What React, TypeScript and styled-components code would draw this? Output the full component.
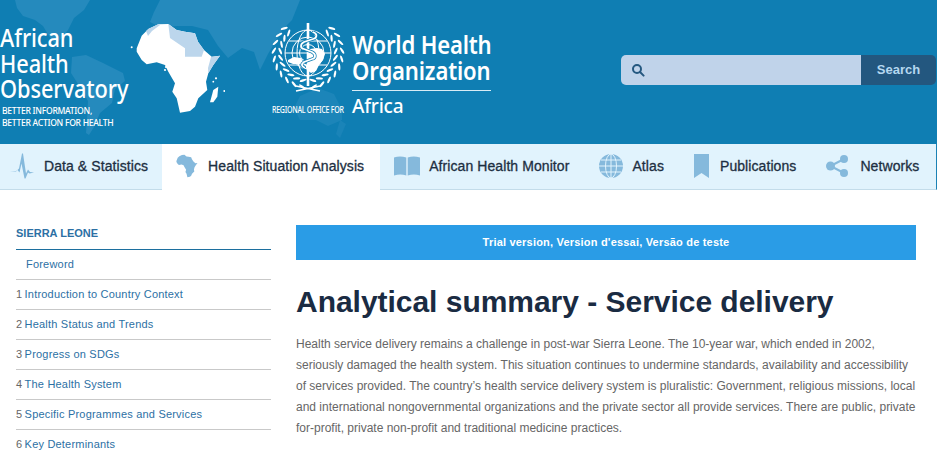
import React from 'react'
import styled, { createGlobalStyle } from 'styled-components'

const GlobalStyle = createGlobalStyle`
  html, body {
    margin: 0;
    padding: 0;
    background: #fff;
    overflow: hidden;
  }
  body {
    font-family: "Liberation Sans", Arial, sans-serif;
  }
`

const Page = styled.div`
  width: 937px;
  height: 451px;
  overflow: hidden;
`

const Header = styled.header`
  position: relative;
  display: flex;
  align-items: flex-start;
  height: 144px;
  background: #0f7eb3;
  overflow: hidden;
`

const WorldMap = styled.svg`
  position: absolute;
  left: 0;
  top: 0;
  width: 520px;
  height: 144px;
`

const Brand = styled.div`
  position: relative;
  flex: none;
  width: 130px;
  padding-top: 25px;
  color: #fff;
  font-family: "Noto Sans", sans-serif;
`

const BrandTitle = styled.div`
  font-size: 24.5px;
  font-weight: 500;
  line-height: 25.5px;
  letter-spacing: -0.1px;
  transform: scaleX(0.89);
  transform-origin: left;
  white-space: nowrap;
`

const BrandTag = styled.div`
  margin: 3px 0 0 2px;
  font-size: 8.6px;
  font-weight: 500;
  line-height: 12px;
  letter-spacing: -0.3px;
  white-space: nowrap;
`

const AfricaShape = styled.svg`
  position: relative;
  flex: none;
  width: 95px;
  height: 105px;
  margin-top: 15px;
`

const Emblem = styled.svg`
  position: relative;
  flex: none;
  width: 80px;
  height: 80px;
  margin: 18px 0 0 43px;
`

const WhoBlock = styled.div`
  position: relative;
  flex: none;
  width: 139px;
  margin: 32px 0 0 4px;
  color: #fff;
  font-family: "Noto Sans", sans-serif;
`

const WhoName = styled.div`
  font-size: 26px;
  font-weight: 600;
  line-height: 25.5px;
  letter-spacing: -0.2px;
  transform: scaleX(0.85);
  transform-origin: left;
  white-space: nowrap;
`

const WhoRule = styled.div`
  height: 1px;
  margin-top: 7px;
  background: #d8ecf6;
`

const OfficeRow = styled.div`
  display: flex;
  align-items: baseline;
  margin: 2px 0 0 -80px;
`

const OfficeLabel = styled.span`
  width: 80px;
  font-size: 8.4px;
  font-weight: 500;
  letter-spacing: -0.3px;
  transform: scaleX(0.84);
  transform-origin: left;
  white-space: nowrap;
`

const OfficeName = styled.span`
  font-size: 19px;
  font-weight: 500;
  letter-spacing: -0.2px;
`

const Search = styled.form`
  position: absolute;
  left: 621px;
  top: 55px;
  display: flex;
  width: 315px;
  height: 30px;
  margin: 0;
  border-radius: 5px;
  overflow: hidden;
`

const SearchField = styled.div`
  display: flex;
  align-items: center;
  width: 240px;
  padding-left: 10px;
  box-sizing: border-box;
  background: #c0d3ea;
  color: #255880;
`

const SearchButton = styled.button`
  width: 75px;
  padding: 0 0 2px;
  border: 0;
  background: #23577f;
  color: #b5d8f0;
  font: bold 13px "Liberation Sans", Arial, sans-serif;
`

const Nav = styled.nav`
  display: flex;
  height: 46px;
  box-sizing: border-box;
  background: #e1f3fd;
  border-bottom: 1px solid #c3dcea;
  border-right: 1px solid #1b82b5;
`

const Tab = styled.a<{ $active?: boolean; $first?: boolean; $gap: number }>`
  display: flex;
  align-items: center;
  gap: ${p => p.$gap}px;
  height: ${p => (p.$active ? '46px' : '45px')};
  box-sizing: border-box;
  padding: 0 ${p => (p.$first ? 14 : 16)}px 2px ${p => (p.$first ? 10 : 14)}px;
  background: ${p => (p.$active ? '#fff' : 'transparent')};
  color: #1d2f42;
  font-size: 14px;
  -webkit-text-stroke: 0.3px #1d2f42;
  letter-spacing: 0.08px;
  white-space: nowrap;
`

const TabIcon = styled.svg`
  flex: none;
  display: block;
  fill: #85b9dc;
`

const Body = styled.div`
  display: flex;
  align-items: flex-start;
  gap: 25px;
  padding: 35px 21px 0 16px;
`

const Sidebar = styled.aside`
  flex: none;
  width: 255px;
`

const SideTitle = styled.div`
  height: 24px;
  border-bottom: 1px solid #1c6f9e;
  color: #2c70a4;
  font-size: 11px;
  font-weight: bold;
  line-height: 16px;
  white-space: nowrap;
`

const SideList = styled.ul`
  margin: 0;
  padding: 0;
  list-style: none;
`

const SideItem = styled.li<{ $plain?: boolean }>`
  height: 30px;
  box-sizing: border-box;
  padding-left: ${p => (p.$plain ? 10 : 0)}px;
  border-bottom: 1px solid #c9c9c9;
  color: #666;
  font-size: 11px;
  line-height: 29px;
  letter-spacing: 0.2px;
  white-space: nowrap;

  &:last-child {
    border-bottom: 0;
  }
`

const SideNumber = styled.span`
  margin-right: -1px;
`

const SideLink = styled.a`
  color: #2c70a4;
`

const Main = styled.main`
  flex: 1;
  min-width: 0;
`

const Notice = styled.div`
  height: 35px;
  background: #2a9ce6;
  color: #fff;
  font-size: 11px;
  font-weight: bold;
  line-height: 35px;
  letter-spacing: 0.2px;
  text-align: center;
`

const Title = styled.h1`
  margin: 24px 0 0;
  color: #1a2b42;
  font-size: 30px;
  font-weight: bold;
  line-height: 36px;
  letter-spacing: -0.03px;
  white-space: nowrap;
`

const Paragraph = styled.p`
  margin: 14px 0 0;
  color: #666;
  font-size: 12px;
  line-height: 21px;
`

const AFRICA =
  'M136.700 48.300L141.700 35.700L148.300 29L158.300 24.300L168.300 24L176.700 30L185 31.700L195 33.300L198 41.700L204 50L211.700 56.700L220 55.700L213.300 65L208.300 73.300L206 81.700L207.300 90L198.300 98.300L195 106.700L190 111L180 112.700L176.700 98.300L172.300 91.700L175 83.300L168.300 71.700L165 65L156.700 62.300L146.700 64.300L141.700 60L136.700 51.700Z'

const menu = [
  { n: '1', label: 'Introduction to Country Context' },
  { n: '2', label: 'Health Status and Trends' },
  { n: '3', label: 'Progress on SDGs' },
  { n: '4', label: 'The Health System' },
  { n: '5', label: 'Specific Programmes and Services' },
  { n: '6', label: 'Key Determinants' },
]

const wreathAngles = [100, 114, 128, 142, 156, 170, 184, 198, 212, 226]

const WhoEmblem = () => (
  <Emblem viewBox="0 0 80 80">
    <g fill="none" stroke="#fff" strokeWidth="1">
      <circle cx="40" cy="35" r="23" />
      <circle cx="40" cy="35" r="16" />
      <circle cx="40" cy="35" r="8.500" />
      <ellipse cx="40" cy="35" rx="11" ry="23" />
      <path d="M17 35h46M21 23h38M21 47h38" />
    </g>
    <path
      fill="#fff"
      d="M20 42l6-3 7 1 3 5 3 2V36l3-5 7-1 5 1 3 5-2 6-4 5-3 6-5 2-4-3-2-5-6-1-6 0-5-2z"
    />
    <rect x="38.700" y="5" width="2.600" height="63" fill="#fff" />
    {['#0f7eb3', '#fff'].map((stroke, i) => (
      <path
        key={stroke}
        d="M45 14c5 2 4 6 0 7l-9 3c-4 2-4 6 0 7l8 3c4 2 4 6 0 7l-8 3c-3 2-3 4 1 6"
        fill="none"
        stroke={stroke}
        strokeWidth={i === 0 ? 3.2 : 1.8}
      />
    ))}
    {[0, 1].map(side => (
      <g key={side} transform={side === 1 ? 'translate(80 0) scale(-1 1)' : undefined}>
        {wreathAngles.map(a => {
          const rad = (a * Math.PI) / 180
          return [-3.2, 3.2].map(off => {
            const r = 31 + off
            const x = 40 + Math.cos(rad) * r
            const y = 35 + Math.sin(rad) * r
            const tilt = a + 90 + (off > 0 ? 28 : -28)
            return (
              <ellipse
                key={off}
                cx={x}
                cy={y}
                rx="3.600"
                ry="1.100"
                fill="#fff"
                transform={`rotate(${tilt} ${x} ${y})`}
              />
            )
          })
        })}
      </g>
    ))}
    <path d="M28 73l24-5M52 73l-24-5" stroke="#fff" strokeWidth="1.500" />
  </Emblem>
)

export default function App() {
  return (
    <Page>
      <GlobalStyle />
      <Header>
        <WorldMap viewBox="0 0 520 144">
          <g fill="#258abd">
            <path d="M15 0h75l-6 10-10 8-6 12-8 10-5 4-6-8-6-10-8-6-12-4-6-8z" />
            <path d="M72 57l14-2 17 8 20 10 2 8-10 8-3 14-12 10-6 14-5 8-3-2 1-14 1-18-8-14-9-14z" />
            <path d="M150 22l4-10 6-12h140l-8 20-10 10-8 14-6 10-8 16-6-18-12-4-14 10-10-12-10-16-16-4-14 0-18 1z" />
            <path d="M300 96l18-8 16 6 8 16 0 10-14 6-12-6-16 0-6-12z" opacity="0.6" />
            <path d="M340 120l6 4-6 14-4-4z" opacity="0.5" />
          </g>
        </WorldMap>
        <Brand>
          <BrandTitle>African<br />Health<br />Observatory</BrandTitle>
          <BrandTag>BETTER INFORMATION,<br />BETTER ACTION FOR HEALTH</BrandTag>
        </Brand>
        <AfricaShape viewBox="130 15 95 105">
          <path fill="#fff" d={AFRICA} />
          <path fill="#bcd6ec" d="M168.300 24L176.700 30L185 31.700L195 33.300L198 41.700L204 50L201.700 56.700L185 56.700L185 48.300L170 38ZM146 31L149 28.500L158.300 24.300L160 25L152 31L148 36ZM211 57L220 55.700L213.300 65L208.300 73.300L208 68Z" />
          <path fill="#fff" d="M210 102.300L213.300 90L218.300 86.700L217.300 96.700L213.300 102.300Z" />
          <circle cx="131.700" cy="47.300" r="1" fill="#fff" />
          <circle cx="165" cy="70" r="1.100" fill="#fff" />
          <circle cx="166" cy="67" r="1.100" fill="#fff" />
          <circle cx="213.300" cy="81.700" r="0.900" fill="#fff" />
          <circle cx="216" cy="78.300" r="1.100" fill="#fff" />
          <circle cx="224.300" cy="91" r="1" fill="#fff" />
        </AfricaShape>
        <WhoEmblem />
        <WhoBlock>
          <WhoName>World Health<br />Organization</WhoName>
          <WhoRule />
          <OfficeRow>
            <OfficeLabel>REGIONAL OFFICE FOR</OfficeLabel>
            <OfficeName>Africa</OfficeName>
          </OfficeRow>
        </WhoBlock>
        <Search onSubmit={e => e.preventDefault()}>
          <SearchField>
            <svg width="14" height="14" viewBox="0 0 14 14" fill="none" stroke="currentColor" strokeWidth="2">
              <circle cx="6" cy="6" r="4" />
              <path d="M9 9l3.600 3.600" strokeLinecap="round" />
            </svg>
          </SearchField>
          <SearchButton>Search</SearchButton>
        </Search>
      </Header>
      <Nav>
        <Tab $first $gap={10}>
          <TabIcon width="24" height="26" viewBox="0 0 24 26">
            <path d="M0 19l6-.5 3-3 3-15 1 0 3 20 2-4 2 2.500 4 .5-4.500 1-1.500-1-2.500 6-1 0-3-15-2 9-2-2.500-1.500 1z" />
          </TabIcon>
          Data &amp; Statistics
        </Tab>
        <Tab $active $gap={10}>
          <TabIcon width="22" height="24" viewBox="135 22 87 92">
            <path d={AFRICA} />
          </TabIcon>
          Health Situation Analysis
        </Tab>
        <Tab $gap={9}>
          <TabIcon width="26" height="20" viewBox="0 0 26 20">
            <path d="M0 1.500c4-1.500 8-1.500 12.300 0v18c-4-1.500-8-1.500-12.300 0zM13.700 1.500c4-1.500 8-1.500 12.300 0v18c-4-1.500-8-1.500-12.300 0z" />
          </TabIcon>
          African Health Monitor
        </Tab>
        <Tab $gap={9}>
          <TabIcon width="24" height="24" viewBox="0 0 24 24">
            <circle cx="12" cy="12" r="12" />
            <g fill="none" stroke="#e1f3fd" strokeWidth="1">
              <ellipse cx="12" cy="12" rx="5.500" ry="12" />
              <path d="M12 0v24M0 12h24M2 6h20M2 18h20" />
            </g>
          </TabIcon>
          Atlas
        </Tab>
        <Tab $gap={11}>
          <TabIcon width="15" height="24" viewBox="0 0 15 24">
            <path d="M0 0h15v24l-7.500-5-7.500 5z" />
          </TabIcon>
          Publications
        </Tab>
        <Tab $gap={12}>
          <TabIcon width="22" height="22" viewBox="0 0 22 22">
            <circle cx="4.500" cy="11" r="4.500" />
            <circle cx="18" cy="4" r="4" />
            <circle cx="18" cy="18" r="4" />
            <path d="M4.500 11L18 4M4.500 11L18 18" stroke="#85b9dc" strokeWidth="2" />
          </TabIcon>
          Networks
        </Tab>
      </Nav>
      <Body>
        <Sidebar>
          <SideTitle>SIERRA LEONE</SideTitle>
          <SideList>
            <SideItem $plain><SideLink>Foreword</SideLink></SideItem>
            {menu.map(item => (
              <SideItem key={item.n}>
                <SideNumber>{item.n} </SideNumber><SideLink>{item.label}</SideLink>
              </SideItem>
            ))}
          </SideList>
        </Sidebar>
        <Main>
          <Notice>Trial version, Version d'essai, Versão de teste</Notice>
          <Title>Analytical summary - Service delivery</Title>
          <Paragraph>
            Health service delivery remains a challenge in post-war Sierra Leone. The 10-year war, which ended in 2002,
            seriously damaged the health system. This situation continues to undermine standards, availability and accessibility
            of services provided. The country’s health service delivery system is pluralistic: Government, religious missions, local
            and international nongovernmental organizations and the private sector all provide services. There are public, private
            for-profit, private non-profit and traditional medicine practices.
          </Paragraph>
        </Main>
      </Body>
    </Page>
  )
}
